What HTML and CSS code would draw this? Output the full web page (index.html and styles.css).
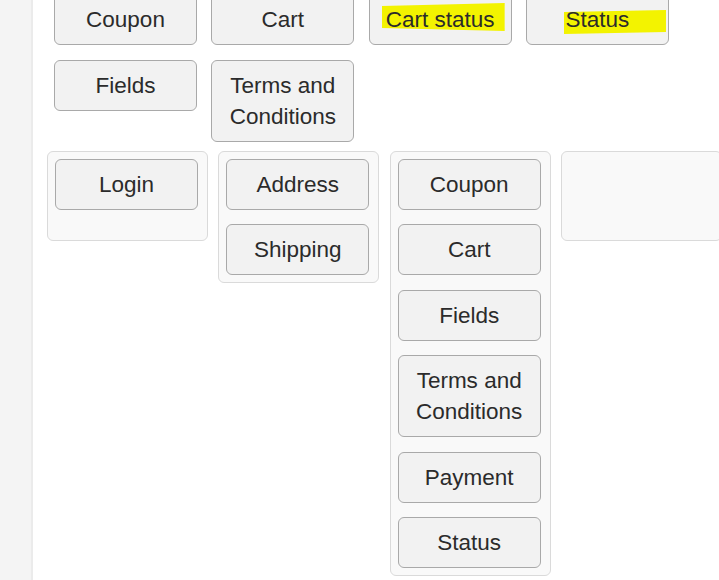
FILE: index.html
```html
<!DOCTYPE html>
<html>
<head>
<meta charset="utf-8">
<link rel="stylesheet" href="styles.css">
</head>
<body>
<div class="page">
  <aside class="sidebar"></aside>
  <main class="main">
    <div class="palette">
      <div class="btn">Coupon</div>
      <div class="btn">Cart</div>
      <div class="btn marked"><span class="mark mark-cart"></span><span class="label">Cart status</span></div>
      <div class="btn marked"><span class="mark mark-status"></span><span class="label">Status</span></div>
      <div class="btn">Fields</div>
      <div class="btn">Terms and Conditions</div>
    </div>
    <div class="columns">
      <div class="column">
        <div class="btn">Login</div>
      </div>
      <div class="column">
        <div class="btn">Address</div>
        <div class="btn">Shipping</div>
      </div>
      <div class="column">
        <div class="btn">Coupon</div>
        <div class="btn">Cart</div>
        <div class="btn">Fields</div>
        <div class="btn">Terms and Conditions</div>
        <div class="btn">Payment</div>
        <div class="btn">Status</div>
      </div>
      <div class="column"></div>
    </div>
  </main>
</div>
</body>
</html>
```

FILE: styles.css
```css
html, body {
  margin: 0;
  padding: 0;
  background: #ffffff;
}
body {
  font-family: "Liberation Sans", Arial, sans-serif;
  color: #333333;
  overflow: hidden;
}
.page {
  display: flex;
  width: 719px;
  height: 580px;
  overflow: hidden;
}
.sidebar {
  flex: 0 0 31px;
  background: #f4f4f4;
  border-right: 2px solid #ebebeb;
}
.main {
  flex: 1;
  min-width: 0;
  overflow: hidden;
}
.palette {
  display: flex;
  flex-wrap: wrap;
  align-items: flex-start;
  column-gap: 14.33px;
  row-gap: 14.5px;
  margin: -6px 0 0 21px;
  width: 665px;
}
.btn {
  box-sizing: border-box;
  width: 143px;
  padding: 9px 8px;
  border: 1px solid #a9a9a9;
  border-radius: 6px;
  background: #f2f2f2;
  font-size: 22.5px;
  line-height: 31px;
  text-align: center;
  color: #2b2b2b;
}
.marked {
  position: relative;
  isolation: isolate;
}
.marked .label {
  position: relative;
  z-index: 1;
}
.mark {
  position: absolute;
  background: #f3f300;
  z-index: 0;
}
.mark-cart {
  left: 12px;
  top: 8px;
  width: 123px;
  height: 28px;
  clip-path: polygon(0 3px, 100% 0, 100% 100%, 0 calc(100% - 3px));
}
.mark-status {
  left: 37px;
  top: 15px;
  width: 102px;
  height: 24px;
  clip-path: polygon(0 2px, 100% 0, 100% calc(100% - 2px), 0 100%);
}
.columns {
  display: flex;
  align-items: flex-start;
  gap: 10.33px;
  margin: 9px 0 0 14px;
}
.column {
  box-sizing: border-box;
  flex: 0 0 161px;
  min-height: 90px;
  padding: 7px;
  border: 1px solid #dadada;
  border-radius: 6px;
  background: #f9f9f9;
  display: flex;
  flex-direction: column;
  gap: 14.5px;
}
```
